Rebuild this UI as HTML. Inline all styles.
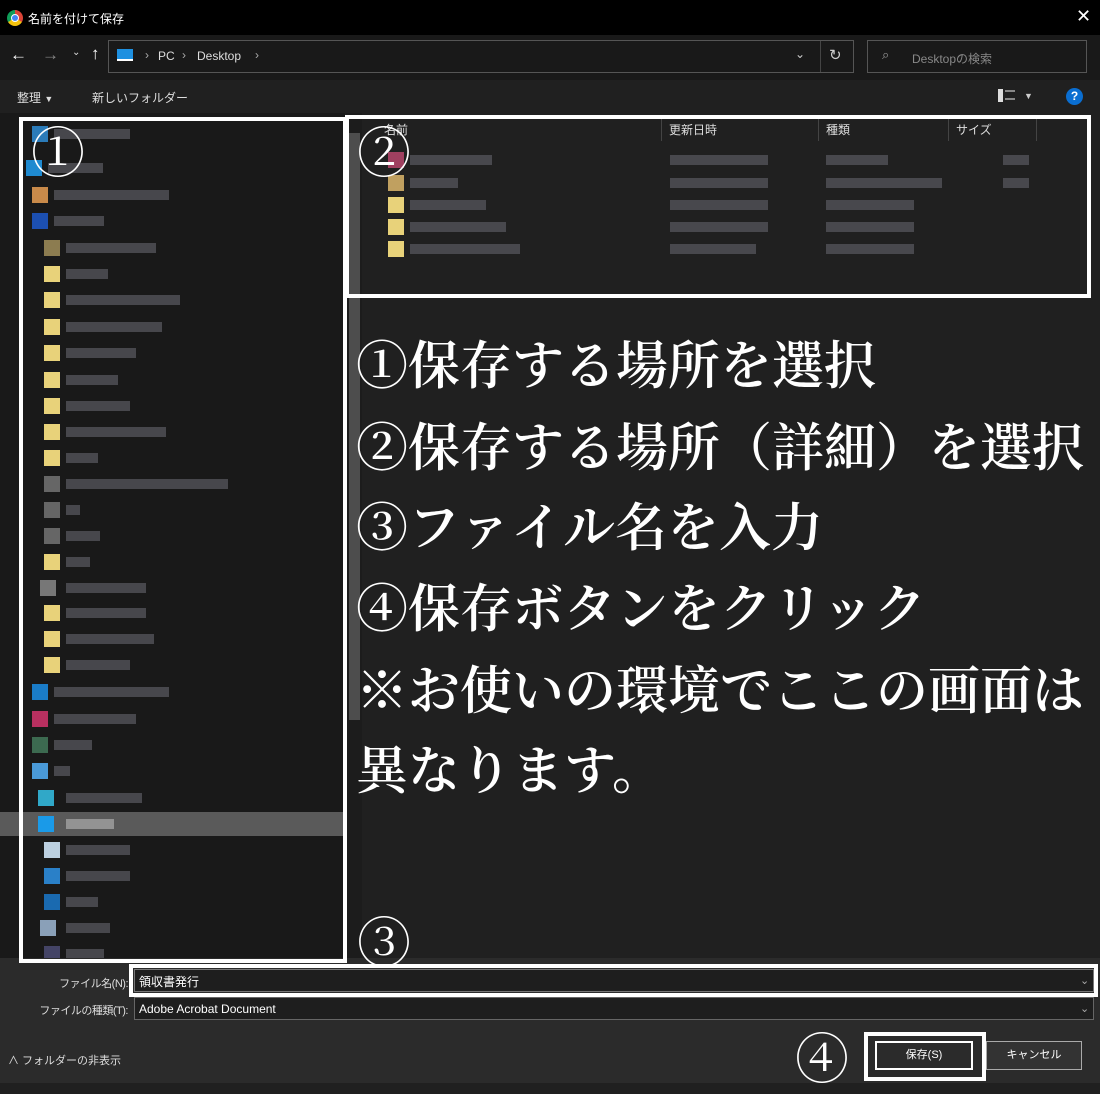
<!DOCTYPE html>
<html><head><meta charset="utf-8"><style>
*{margin:0;padding:0;box-sizing:border-box}
body{width:1100px;height:1083px;background:#202020;position:relative;overflow:hidden;font-family:"Liberation Sans","Noto Sans CJK JP",sans-serif;color:#fff;font-size:12px}
.a{position:absolute}
.ic{position:absolute;width:16px;height:16px}
.bar{position:absolute;height:10px;background:#4c4c52;opacity:.9}
.big{position:absolute;left:356px;font-family:"Noto Serif CJK SC","Noto Serif CJK JP",serif;font-weight:600;font-size:52px;line-height:60px;color:#fff;white-space:nowrap;letter-spacing:0}
.box{position:absolute;border:4px solid #fff}
.lbl{position:absolute;right:972px;font-size:11px;color:#ddd;white-space:nowrap;letter-spacing:-0.5px}
</style></head><body>
<div class="a" style="left:0;top:0;width:1100px;height:35px;background:#000"></div>
<div class="a" style="left:7px;top:10px;width:16px;height:16px;border-radius:50%;background:conic-gradient(#db4437 0 120deg,#f4c20d 120deg 240deg,#0f9d58 240deg 360deg)"></div>
<div class="a" style="left:11px;top:14px;width:8px;height:8px;border-radius:50%;background:#4285f4;border:1px solid #fff"></div>
<div class="a" style="left:28px;top:10px;font-size:12px;color:#fff">名前を付けて保存</div>
<div class="a" style="left:1076px;top:6px;font-size:18px;color:#fff">✕</div>
<div class="a" style="left:0;top:35px;width:1100px;height:45px;background:#191919"></div>
<div class="a" style="left:10px;top:45px;font-size:17px;color:#fff">←</div>
<div class="a" style="left:42px;top:45px;font-size:17px;color:#888">→</div>
<div class="a" style="left:72px;top:47px;font-size:10px;color:#ddd">⌄</div>
<div class="a" style="left:91px;top:44px;font-size:17px;color:#fff">↑</div>
<div class="a" style="left:108px;top:40px;width:746px;height:33px;border:1px solid #555"></div>
<div class="a" style="left:820px;top:41px;width:1px;height:31px;background:#444"></div>
<div class="a" style="left:117px;top:49px;width:16px;height:12px;background:#1e90e0;border-bottom:2px solid #fff"></div>
<div class="a" style="left:145px;top:48px;color:#aaa">›</div>
<div class="a" style="left:158px;top:49px;color:#ddd">PC</div>
<div class="a" style="left:182px;top:48px;color:#aaa">›</div>
<div class="a" style="left:197px;top:49px;color:#ddd">Desktop</div>
<div class="a" style="left:255px;top:48px;color:#aaa">›</div>
<div class="a" style="left:795px;top:47px;color:#ccc;font-size:12px">⌄</div>
<div class="a" style="left:829px;top:46px;color:#ccc;font-size:15px">↻</div>
<div class="a" style="left:867px;top:40px;width:220px;height:33px;border:1px solid #555"></div>
<div class="a" style="left:882px;top:47px;color:#999;font-size:13px">⌕</div>
<div class="a" style="left:912px;top:50px;color:#888;font-size:12px">Desktopの検索</div>
<div class="a" style="left:0;top:80px;width:1100px;height:33px;background:#202020"></div>
<div class="a" style="left:17px;top:89px;color:#ddd">整理 <span style="font-size:9px">▼</span></div>
<div class="a" style="left:92px;top:89px;color:#ddd">新しいフォルダー</div>
<div class="a" style="left:998px;top:89px;width:5px;height:13px;background:#ddd"></div>
<div class="a" style="left:1005px;top:90px;width:10px;height:10px;border-top:2px solid #888;border-bottom:2px solid #888"></div>
<div class="a" style="left:1024px;top:91px;font-size:9px;color:#ccc">▼</div>
<div class="a" style="left:1066px;top:88px;width:17px;height:17px;border-radius:50%;background:#0a6ed1;color:#fff;font-weight:bold;font-size:12px;text-align:center;line-height:17px">?</div>
<div class="a" style="left:0;top:113px;width:345px;height:845px;background:#191919"></div>
<div class="a" style="left:346px;top:113px;width:16px;height:845px;background:#1c1c1c"></div>
<div class="a" style="left:349px;top:133px;width:11px;height:587px;background:#4d4d4d"></div>
<div class="a" style="left:0;top:812px;width:345px;height:24px;background:#5a5a5a"></div>
<div class="ic" style="left:32px;top:126px;background:#2b7bb8"></div><div class="bar" style="left:54px;top:129px;width:76px"></div>
<div class="ic" style="left:26px;top:160px;background:#1f8ad0"></div><div class="bar" style="left:48px;top:163px;width:55px"></div>
<div class="ic" style="left:32px;top:187px;background:#c98a4a"></div><div class="bar" style="left:54px;top:190px;width:115px"></div>
<div class="ic" style="left:32px;top:213px;background:#1c4fb0"></div><div class="bar" style="left:54px;top:216px;width:50px"></div>
<div class="ic" style="left:44px;top:240px;background:#8c7c50"></div><div class="bar" style="left:66px;top:243px;width:90px"></div>
<div class="ic" style="left:44px;top:266px;background:#e8d27a"></div><div class="bar" style="left:66px;top:269px;width:42px"></div>
<div class="ic" style="left:44px;top:292px;background:#e8d27a"></div><div class="bar" style="left:66px;top:295px;width:114px"></div>
<div class="ic" style="left:44px;top:319px;background:#e8d27a"></div><div class="bar" style="left:66px;top:322px;width:96px"></div>
<div class="ic" style="left:44px;top:345px;background:#e8d27a"></div><div class="bar" style="left:66px;top:348px;width:70px"></div>
<div class="ic" style="left:44px;top:372px;background:#e8d27a"></div><div class="bar" style="left:66px;top:375px;width:52px"></div>
<div class="ic" style="left:44px;top:398px;background:#e8d27a"></div><div class="bar" style="left:66px;top:401px;width:64px"></div>
<div class="ic" style="left:44px;top:424px;background:#e8d27a"></div><div class="bar" style="left:66px;top:427px;width:100px"></div>
<div class="ic" style="left:44px;top:450px;background:#e8d27a"></div><div class="bar" style="left:66px;top:453px;width:32px"></div>
<div class="ic" style="left:44px;top:476px;background:#666"></div><div class="bar" style="left:66px;top:479px;width:162px"></div>
<div class="ic" style="left:44px;top:502px;background:#666"></div><div class="bar" style="left:66px;top:505px;width:14px"></div>
<div class="ic" style="left:44px;top:528px;background:#666"></div><div class="bar" style="left:66px;top:531px;width:34px"></div>
<div class="ic" style="left:44px;top:554px;background:#e8d27a"></div><div class="bar" style="left:66px;top:557px;width:24px"></div>
<div class="ic" style="left:40px;top:580px;background:#777"></div><div class="bar" style="left:66px;top:583px;width:80px"></div>
<div class="ic" style="left:44px;top:605px;background:#e8d27a"></div><div class="bar" style="left:66px;top:608px;width:80px"></div>
<div class="ic" style="left:44px;top:631px;background:#e8d27a"></div><div class="bar" style="left:66px;top:634px;width:88px"></div>
<div class="ic" style="left:44px;top:657px;background:#e8d27a"></div><div class="bar" style="left:66px;top:660px;width:64px"></div>
<div class="ic" style="left:32px;top:684px;background:#1a7cc8"></div><div class="bar" style="left:54px;top:687px;width:115px"></div>
<div class="ic" style="left:32px;top:711px;background:#b83060"></div><div class="bar" style="left:54px;top:714px;width:82px"></div>
<div class="ic" style="left:32px;top:737px;background:#3c6a50"></div><div class="bar" style="left:54px;top:740px;width:38px"></div>
<div class="ic" style="left:32px;top:763px;background:#4a9ad8"></div><div class="bar" style="left:54px;top:766px;width:16px"></div>
<div class="ic" style="left:38px;top:790px;background:#30a8c8"></div><div class="bar" style="left:66px;top:793px;width:76px"></div>
<div class="ic" style="left:38px;top:816px;background:#1a9ae8"></div><div class="bar" style="left:66px;top:819px;width:48px;background:#999"></div>
<div class="ic" style="left:44px;top:842px;background:#bcd0e0"></div><div class="bar" style="left:66px;top:845px;width:64px"></div>
<div class="ic" style="left:44px;top:868px;background:#2a80c8"></div><div class="bar" style="left:66px;top:871px;width:64px"></div>
<div class="ic" style="left:44px;top:894px;background:#1a6ab0"></div><div class="bar" style="left:66px;top:897px;width:32px"></div>
<div class="ic" style="left:40px;top:920px;background:#8aa0b8"></div><div class="bar" style="left:66px;top:923px;width:44px"></div>
<div class="ic" style="left:44px;top:946px;background:#446"></div><div class="bar" style="left:66px;top:949px;width:38px"></div>
<div class="a" style="left:384px;top:121px;color:#ddd">名前</div>
<div class="a" style="left:661px;top:119px;width:1px;height:22px;background:#444"></div>
<div class="a" style="left:669px;top:121px;color:#ddd">更新日時</div>
<div class="a" style="left:818px;top:119px;width:1px;height:22px;background:#444"></div>
<div class="a" style="left:826px;top:121px;color:#ddd">種類</div>
<div class="a" style="left:948px;top:119px;width:1px;height:22px;background:#444"></div>
<div class="a" style="left:956px;top:121px;color:#ddd">サイズ</div>
<div class="a" style="left:1036px;top:119px;width:1px;height:22px;background:#444"></div>
<div class="ic" style="left:388px;top:152px;background:#a04060"></div><div class="bar" style="left:410px;top:155px;width:82px"></div>
<div class="ic" style="left:388px;top:175px;background:#c0a060"></div><div class="bar" style="left:410px;top:178px;width:48px"></div>
<div class="ic" style="left:388px;top:197px;background:#e8d27a"></div><div class="bar" style="left:410px;top:200px;width:76px"></div>
<div class="ic" style="left:388px;top:219px;background:#e8d27a"></div><div class="bar" style="left:410px;top:222px;width:96px"></div>
<div class="ic" style="left:388px;top:241px;background:#e8d27a"></div><div class="bar" style="left:410px;top:244px;width:110px"></div>
<div class="bar" style="left:670px;top:155px;width:98px"></div><div class="bar" style="left:826px;top:155px;width:62px"></div><div class="bar" style="left:1003px;top:155px;width:26px"></div>
<div class="bar" style="left:670px;top:178px;width:98px"></div><div class="bar" style="left:826px;top:178px;width:116px"></div><div class="bar" style="left:1003px;top:178px;width:26px"></div>
<div class="bar" style="left:670px;top:200px;width:98px"></div><div class="bar" style="left:826px;top:200px;width:88px"></div>
<div class="bar" style="left:670px;top:222px;width:98px"></div><div class="bar" style="left:826px;top:222px;width:88px"></div>
<div class="bar" style="left:670px;top:244px;width:86px"></div><div class="bar" style="left:826px;top:244px;width:88px"></div>
<div class="a" style="left:0;top:958px;width:1100px;height:125px;background:#2b2b2b"></div>
<div class="lbl" style="top:975px">ファイル名(N):</div>
<div class="a" style="left:134px;top:969px;width:960px;height:23px;background:#1e1e1e;border:1px solid #777"></div>
<div class="a" style="left:139px;top:973px;color:#fff">領収書発行</div>
<div class="a" style="left:1080px;top:974px;color:#aaa;font-size:11px">⌄</div>
<div class="lbl" style="top:1002px">ファイルの種類(T):</div>
<div class="a" style="left:134px;top:997px;width:960px;height:23px;background:#1e1e1e;border:1px solid #666"></div>
<div class="a" style="left:139px;top:1002px;color:#fff">Adobe Acrobat Document</div>
<div class="a" style="left:1080px;top:1002px;color:#aaa;font-size:11px">⌄</div>
<div class="a" style="left:8px;top:1052px;color:#ddd;font-size:11px">∧ フォルダーの非表示</div>
<div class="a" style="left:875px;top:1041px;width:98px;height:29px;border:2px solid #fff;background:#2b2b2b;color:#fff;text-align:center;line-height:25px;font-size:11px">保存(S)</div>
<div class="a" style="left:986px;top:1041px;width:96px;height:29px;border:1px solid #aaa;background:#333;color:#fff;text-align:center;line-height:27px;font-size:11px">キャンセル</div>
<div class="box" style="left:19px;top:117px;width:328px;height:846px"></div>
<div class="box" style="left:345px;top:115px;width:746px;height:183px"></div>
<div class="box" style="left:129px;top:964px;width:969px;height:33px"></div>
<div class="box" style="left:864px;top:1032px;width:122px;height:49px"></div>
<div class="a" style="left:31px;top:120px;font-family:'Noto Serif CJK SC',serif;font-size:54px;line-height:60px">①</div>
<div class="a" style="left:357px;top:120px;font-family:'Noto Serif CJK SC',serif;font-size:54px;line-height:60px">②</div>
<div class="a" style="left:357px;top:910px;font-family:'Noto Serif CJK SC',serif;font-size:54px;line-height:60px">③</div>
<div class="a" style="left:795px;top:1026px;font-family:'Noto Serif CJK SC',serif;font-size:54px;line-height:60px">④</div>
<div class="big" style="top:332px">①保存する場所を選択</div>
<div class="big" style="top:414px">②保存する場所（詳細）を選択</div>
<div class="big" style="top:494px">③ファイル名を入力</div>
<div class="big" style="top:575px">④保存ボタンをクリック</div>
<div class="big" style="top:657px">※お使いの環境でここの画面は</div>
<div class="big" style="top:737px">異なります。</div>
</body></html>
